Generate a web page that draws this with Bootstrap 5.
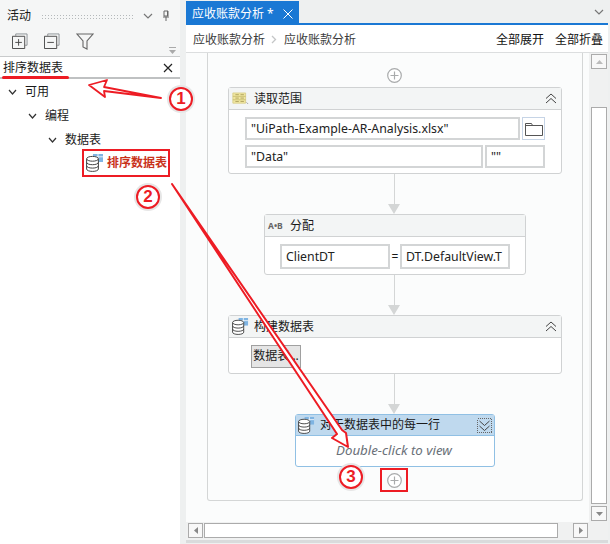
<!DOCTYPE html>
<html lang="zh"><head><meta charset="utf-8"><title>活动</title>
<link rel="stylesheet" href="https://cdn.jsdelivr.net/npm/bootstrap@5.3.0/dist/css/bootstrap.min.css">
<style>
html,body{margin:0;height:544px;overflow:hidden}
body{width:610px;background:#eef0f0;font:12px/16px "Noto Sans","Noto Sans CJK SC",sans-serif;color:#1a1a1a;position:relative}
.side{width:180px;height:544px;background:#fff}
.side-title{height:26px;background:#f5f6f6;padding:6px 9px 0 7px}
.grip{flex:1;height:5px;margin:0 10px;background-image:radial-gradient(#b5b9bb 40%,transparent 45%);background-size:3px 3px}
.side-tools{height:31px;background:#f5f6f6;border-bottom:1px solid #c9cbcc;padding:0 12px;gap:16px;position:relative}
.overflow-mark{position:absolute;right:4px;bottom:2px}
.side-search{height:22px;border-bottom:2px solid #bfc1c2;padding:2px 7px 0 3px}
.tree-wrap{padding-top:1px}
.tree-row{height:24px;gap:8px}
.lvl1{padding-left:8px}.lvl2{padding-left:28px}.lvl3{padding-left:48px}
.hit{margin:-3px 0 0 82px;width:88px;height:28px;border:2px solid #ed1c24;padding-left:2px;gap:3px;color:#c9331c;font-weight:700}
.gutter{width:6px}
.work{width:422px;height:544px}
.tabs{height:25px;border-bottom:2px solid #1a78d4}
.doc-tab{width:113px;height:22px;margin-top:1px;background:#1a78d4;color:#fff;padding:3px 0 0 6px;gap:9px}
.crumb{height:28px;background:#fff;border-bottom:1px solid #dcdedf;padding:2px 5px 0 7px;color:#3c3c3c}
.crumb-sep{margin:0 7px 0 6px}
.crumb-end{color:#111;gap:11px}
.mid{height:469px}
.canvas{width:403px;background:#fbfcfc;overflow:hidden}
.seq{margin-left:21px;width:376px;height:448px;background:#fbfcfc;border:1px solid #d4d6d6;border-top:0;border-radius:0 0 3px 3px;padding-top:15px}
.add-top{flex:none;margin-right:2px}
.act{background:#fff;border:1px solid #d0d2d3;border-radius:3px;flex:none}
.act-head{height:22px;background:#f3f5f5;border-bottom:1px solid #d0d2d3;padding:0 4px 0 3px;gap:5px}
.act-title{flex:1}
.w-big{width:334px}.w-mid{width:262px}
.h-read{height:87px;margin-top:4px}.h-assign{height:61px}.h-build{height:59px}
.read-body{padding:7px 16px 0;gap:5px}
.read-line{gap:2px}
.fld{height:23px;background:#fff;border:2px solid #d3d5d6;padding:0 4px;color:#222;font-size:12.3px;line-height:19px;white-space:nowrap;overflow:hidden}
.fld-short{width:60px;flex:none}
.fld-assign{width:110px;height:25px;line-height:21px;flex:none}
.folder{width:23px;height:23px;background:#fff;border:1px solid #c6d4e6;flex:none}
.assign-body{padding:7px 15px 0}
.ab-tag{font-size:8.5px;width:17px;white-space:nowrap;color:#666}
.data-btn{margin:7px 0 0 22px;width:50px;height:23px;background:#e5e5e5;border:1px solid #a0a0a0;line-height:20px;text-align:center;white-space:nowrap;overflow:hidden}
.link{width:12px;height:40px;flex:none;position:relative;margin-right:2px}
.link::before{content:"";position:absolute;left:5.5px;top:0;bottom:8px;width:1px;background:#d4d6d6}
.link::after{content:"";position:absolute;left:0;bottom:0;border:solid transparent;border-width:10px 6px 0;border-top-color:#d4d6d6}
.each{width:200px;height:53px;border:1px solid #90c0e4;border-radius:3px;background:#fff;flex:none}
.each-head{height:21px;background:#bfd9ee;border-bottom:1px solid #90c0e4;padding:0 2px;gap:5px}
.each-hint{color:#6a7078;font-style:italic;font-size:13.3px;line-height:29px;text-align:center;padding-right:2px}
.plus-box{width:28px;height:24px;border:2px solid #ed1c24;margin:1px 2px 0 0;flex:none}
.vbar{width:19px;background:#f0f1f1;padding:1px 1px 1px 2px}
.sb-btn{background:#f8f8f8;border:1px solid #ababab}
.v-btn{height:15px}.v-track{flex:1;margin:2px 0;padding-top:36px}
.sb-thumb{background:#fff;border:1px solid #ababab}
.hbar{height:18px;background:#f0f1f1;padding:1px 20px 2px 2px;gap:1px}
.h-btn{width:15px}.h-gap{width:13px}
.foot{height:3px;background:#d9dbdc}
.marks{position:absolute;left:0;top:0;z-index:5;pointer-events:none}
.under{position:absolute;left:2px;top:76px;width:67px;height:3px;border-radius:2px;background:#ed1c24;z-index:5}
.num{position:absolute;z-index:6;width:24px;height:24px;border-radius:50%;background:#fff;border:2.5px solid #ed1c24;box-shadow:0 0 0 2px #e6e6e6;color:#ed1c24;font:700 17px/19px "Liberation Sans",sans-serif;text-align:center}
.n1{left:169px;top:87px}.n2{left:136px;top:185px}.n3{left:339px;top:465px}
</style></head>
<body class="d-flex">
<svg width="0" height="0" class="position-absolute"><defs>
  <g id="dbl"><path d="M7 0h10v8H7z" fill="#7fb4e2"/><path d="M7 2.800h10M12 0v8" stroke="#fff" stroke-width=".8"/><path d="M.6 4.800v10.200c0 1.400 2.600 2.400 5.900 2.400s5.900-1 5.900-2.400V4.800M.6 8.300c0 1.400 2.600 2.400 5.900 2.400s5.900-1 5.900-2.400M.6 11.700c0 1.400 2.600 2.400 5.900 2.400s5.900-1 5.900-2.400" fill="#fff" stroke="#444"/><ellipse cx="6.500" cy="4.800" rx="5.900" ry="2.400" fill="#fff" stroke="#444"/></g>
</defs></svg>
<aside class="side d-flex flex-column">
  <div class="side-title d-flex align-items-center"><span>活动</span><span class="grip"></span>
    <svg width="10" height="8" viewBox="0 0 10 8" class="me-2"><path d="M1 2l4 4 4-4" fill="none" stroke="#777" stroke-width="1.2"/></svg>
    <svg width="10" height="12" viewBox="0 0 10 12"><path d="M3 1h4v5H3zM2 7h6M5 7v4M6.500 1v5" fill="none" stroke="#666"/></svg>
  </div>
  <div class="side-tools d-flex align-items-center">
    <svg width="16" height="16" viewBox="0 0 17 17"><path d="M4 3V1h12v12h-2" fill="none" stroke="#8a8f92"/><path d="M.5 3.500h13v13H.5z" fill="#f5f6f6" stroke="#444"/><path d="M3.500 10h7M7 6.500v7" stroke="#444"/></svg>
    <svg width="16" height="16" viewBox="0 0 17 17"><path d="M4 3V1h12v12h-2" fill="none" stroke="#8a8f92"/><path d="M.5 3.500h13v13H.5z" fill="#f5f6f6" stroke="#444"/><path d="M3.500 10h7" stroke="#444"/></svg>
    <svg width="18" height="17" viewBox="0 0 18 17"><path d="M1 1h16l-6 7v8l-4-2V8z" fill="none" stroke="#666" stroke-width="1.100"/></svg>
    <svg class="overflow-mark" width="7" height="7" viewBox="0 0 7 7"><path d="M0 3h7l-3.500 4z" fill="#aaa"/><path d="M0 .5h7" stroke="#aaa"/></svg>
  </div>
  <div class="side-search d-flex align-items-center justify-content-between"><span>排序数据表</span>
    <svg width="10" height="10" viewBox="0 0 10 10"><path d="M1 1l8 8M9 1l-8 8" stroke="#222" stroke-width="1.200"/></svg></div>
  <div class="tree-wrap">
  <div class="tree-row lvl1 d-flex align-items-center"><svg width="9" height="7" viewBox="0 0 9 7"><path d="M1 1l3.500 4L8 1" fill="none" stroke="#333" stroke-width="1.200"/></svg><span>可用</span></div>
  <div class="tree-row lvl2 d-flex align-items-center"><svg width="9" height="7" viewBox="0 0 9 7"><path d="M1 1l3.500 4L8 1" fill="none" stroke="#333" stroke-width="1.200"/></svg><span>编程</span></div>
  <div class="tree-row lvl3 d-flex align-items-center"><svg width="9" height="7" viewBox="0 0 9 7"><path d="M1 1l3.500 4L8 1" fill="none" stroke="#333" stroke-width="1.200"/></svg><span>数据表</span></div>
  <div class="hit d-flex align-items-center">
    <svg width="18" height="18" viewBox="0 0 18 18"><use href="#dbl"/></svg>
    <span>排序数据表</span></div>
  </div>
</aside>
<div class="gutter"></div>
<main class="work d-flex flex-column">
  <div class="tabs d-flex justify-content-between">
    <div class="doc-tab d-flex align-items-center"><span>应收账款分析 *</span><svg width="10" height="10" viewBox="0 0 10 10"><path d="M.5.500l9 9M9.500.5l-9 9" stroke="#fff"/></svg></div>
    <svg class="me-1 mt-2" width="10" height="8" viewBox="0 0 10 8"><path d="M1 2l4 4 4-4" fill="none" stroke="#777" stroke-width="1.200"/></svg>
  </div>
  <div class="crumb d-flex align-items-center justify-content-between">
    <div class="d-flex align-items-center"><span>应收账款分析</span><svg class="crumb-sep" width="6" height="9" viewBox="0 0 6 9"><path d="M1 1l3.500 3.500L1 8" fill="none" stroke="#c4c6c7" stroke-width="1.300"/></svg><span>应收账款分析</span></div>
    <div class="crumb-end d-flex"><span>全部展开</span><span>全部折叠</span></div>
  </div>
  <div class="mid d-flex">
    <div class="canvas">
      <div class="seq d-flex flex-column align-items-center">
        <svg class="add-top" width="15" height="15" viewBox="0 0 15 15"><circle cx="7.500" cy="7.500" r="6.800" fill="#fff" stroke="#a9abac" stroke-width="1.200"/><path d="M3.500 7.500h8M7.500 3.500v8" stroke="#a9abac" stroke-width="1.200"/></svg>
        <section class="act w-big h-read">
          <div class="act-head d-flex align-items-center">
            <svg width="17" height="13" viewBox="0 0 20 15"><path d="M1 1h15v12H1z" fill="#f0e6a0" stroke="#d8cd88"/><path d="M1 5h15M1 9h15" stroke="#c9bd70"/><path d="M4 3h4M10 3h4M4 7h4M10 7h4M4 11h4M10 11h4" stroke="#a89c58"/><path d="M17 12l2 2" stroke="#999"/></svg>
            <span class="act-title">读取范围</span>
            <svg width="12" height="11" viewBox="0 0 12 11"><path d="M1 5.500l5-4.500 5 4.500M1 10l5-4.500 5 4.500" fill="none" stroke="#444"/></svg>
          </div>
          <div class="read-body d-flex flex-column">
            <div class="read-line d-flex"><div class="fld flex-grow-1">"UiPath-Example-AR-Analysis.xlsx"</div>
              <div class="folder d-flex align-items-center justify-content-center"><svg width="18" height="14" viewBox="0 0 18 14"><path d="M.5 13.500V1.500h6l1 2h10v10z" fill="#fff" stroke="#555"/><path d="M.5 3.500h17" stroke="#555"/></svg></div></div>
            <div class="read-line d-flex"><div class="fld flex-grow-1">"Data"</div><div class="fld fld-short">""</div></div>
          </div>
        </section>
        <div class="link"></div>
        <section class="act w-mid h-assign">
          <div class="act-head d-flex align-items-center"><b class="ab-tag">A•B</b><span class="act-title">分配</span></div>
          <div class="assign-body d-flex align-items-center justify-content-between"><div class="fld fld-assign">ClientDT</div><span>=</span><div class="fld fld-assign">DT.DefaultView.T</div></div>
        </section>
        <div class="link"></div>
        <section class="act w-big h-build">
          <div class="act-head d-flex align-items-center">
            <svg width="17" height="17" viewBox="0 0 18 18"><use href="#dbl"/></svg>
            <span class="act-title">构建数据表</span>
            <svg width="12" height="11" viewBox="0 0 12 11"><path d="M1 5.500l5-4.500 5 4.500M1 10l5-4.500 5 4.500" fill="none" stroke="#444"/></svg>
          </div>
          <div class="data-btn">数据表...</div>
        </section>
        <div class="link"></div>
        <section class="each">
          <div class="each-head d-flex align-items-center">
            <svg width="17" height="17" viewBox="0 0 18 18"><use href="#dbl"/></svg>
            <span class="act-title">对于数据表中的每一行</span>
            <svg width="15" height="15" viewBox="0 0 15 15" shape-rendering="crispEdges"><path d="M.5.500h14v14H.5z" fill="none" stroke="#666" stroke-dasharray="1 1"/><path d="M2.500 3L7.500 7.500 12.500 3M2.500 8L7.500 12.500 12.500 8" fill="none" stroke="#444" shape-rendering="auto"/></svg>
          </div>
          <div class="each-hint">Double-click to view</div>
        </section>
        <div class="plus-box d-flex align-items-center justify-content-center"><svg width="15" height="15" viewBox="0 0 15 15"><circle cx="7.500" cy="7.500" r="6.800" fill="#fff" stroke="#a9abac" stroke-width="1.200"/><path d="M3.500 7.500h8M7.500 3.500v8" stroke="#a9abac" stroke-width="1.200"/></svg></div>
      </div>
    </div>
    <div class="vbar d-flex flex-column">
      <div class="sb-btn v-btn d-flex align-items-center justify-content-center"><svg width="7" height="4" viewBox="0 0 7 4"><path d="M0 4h7L3.500 0z" fill="#bbb"/></svg></div>
      <div class="v-track d-flex flex-column"><div class="sb-thumb flex-grow-1"></div></div>
      <div class="sb-btn v-btn d-flex align-items-center justify-content-center"><svg width="7" height="4" viewBox="0 0 7 4"><path d="M0 0h7L3.500 4z" fill="#888"/></svg></div>
    </div>
  </div>
  <div class="hbar d-flex">
    <div class="sb-btn h-btn d-flex align-items-center justify-content-center"><svg width="4" height="7" viewBox="0 0 4 7"><path d="M4 0v7L0 3.500z" fill="#888"/></svg></div>
    <div class="sb-thumb flex-grow-1"></div>
    <div class="h-gap"></div>
    <div class="sb-btn h-btn d-flex align-items-center justify-content-center"><svg width="4" height="7" viewBox="0 0 4 7"><path d="M0 0v7l4-3.500z" fill="#888"/></svg></div>
  </div>
  <div class="foot"></div>
</main>
<div class="under"></div>
<svg class="marks" width="610" height="544" viewBox="0 0 610 544">
  <path d="M89 85L107 80L104 87L161 98L104 91L105 97Z" fill="#fff" stroke="#ed1c24" stroke-width="1.800" stroke-linejoin="round"/>
  <path d="M172 184L342 430L346 433L348 447L332 438L337 434Z" fill="#fff" stroke="#ed1c24" stroke-width="2" stroke-linejoin="round"/>
</svg>
<div class="num n1">1</div><div class="num n2">2</div><div class="num n3">3</div>
</body></html>
